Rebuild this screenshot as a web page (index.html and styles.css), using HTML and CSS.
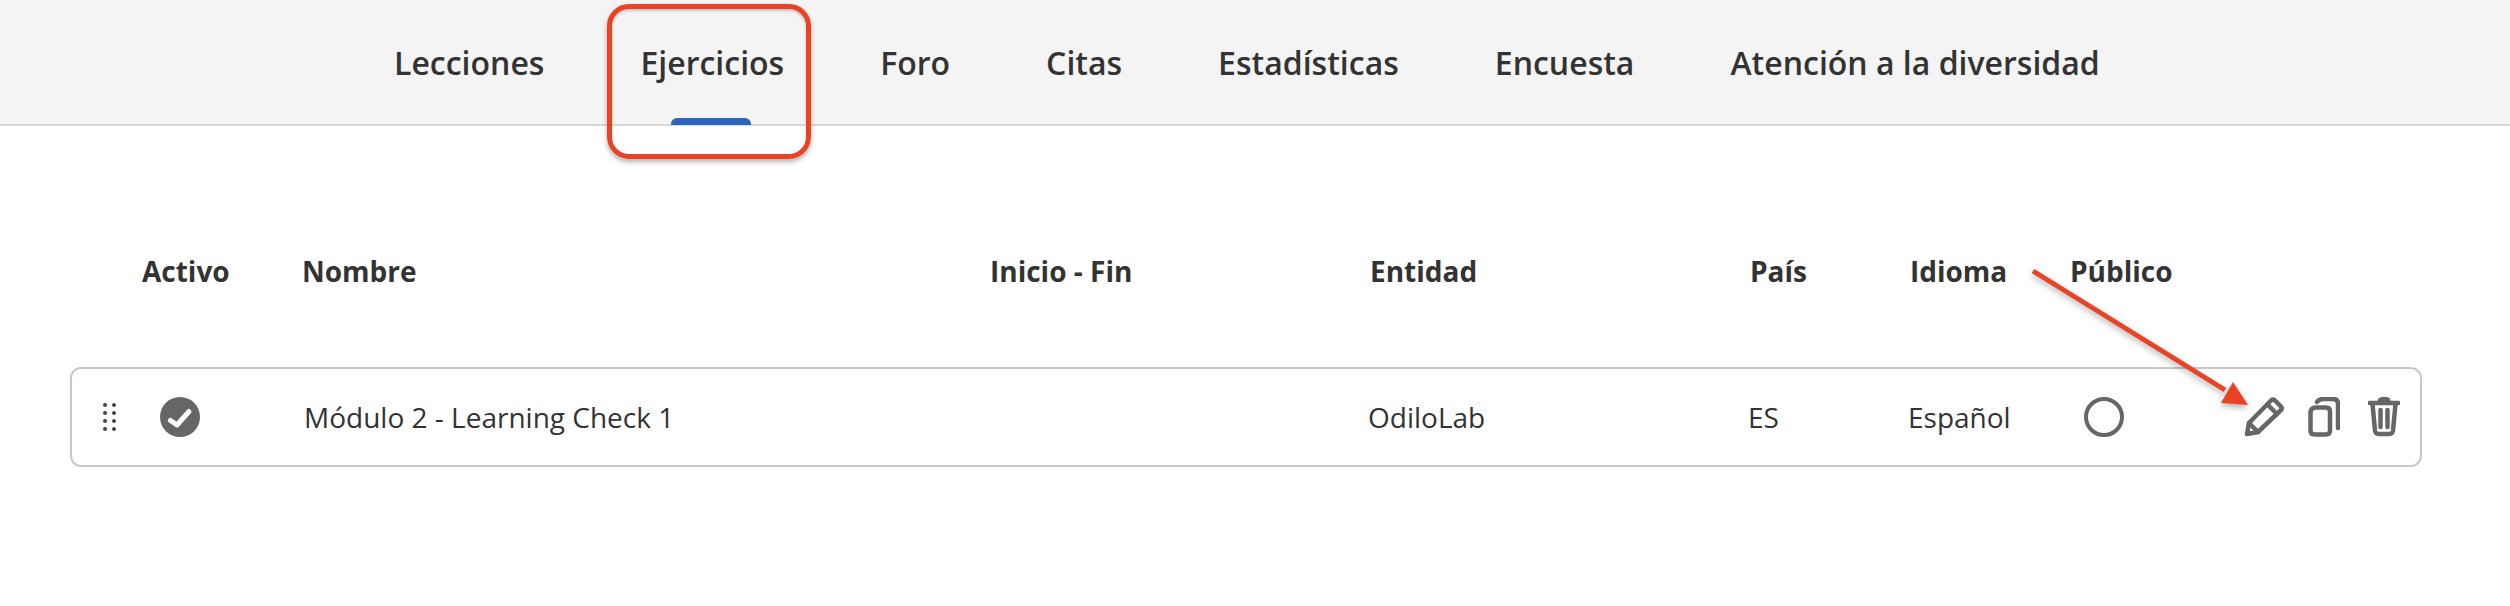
FILE: index.html
```html
<!DOCTYPE html>
<html lang="es">
<head>
<meta charset="utf-8">
<title>Ejercicios</title>
<link rel="stylesheet" href="styles.css">
</head>
<body>
<div class="page">
  <nav class="tabs">
    <a class="tab">Lecciones</a>
    <a class="tab tab-active">Ejercicios</a>
    <a class="tab">Foro</a>
    <a class="tab">Citas</a>
    <a class="tab">Estadísticas</a>
    <a class="tab">Encuesta</a>
    <a class="tab">Atención a la diversidad</a>
  </nav>
  <main class="content">
    <div class="table-head">
      <div>Activo</div>
      <div>Nombre</div>
      <div>Inicio - Fin</div>
      <div>Entidad</div>
      <div>País</div>
      <div>Idioma</div>
      <div>Público</div>
    </div>
    <div class="table-row">
      <div class="drag">
        <svg class="icon-drag" viewBox="0 0 13 28" width="13" height="28"><g class="dots"><circle cx="2" cy="2" r="2"/><circle cx="11" cy="2" r="2"/><circle cx="2" cy="10" r="2"/><circle cx="11" cy="10" r="2"/><circle cx="2" cy="18" r="2"/><circle cx="11" cy="18" r="2"/><circle cx="2" cy="26" r="2"/><circle cx="11" cy="26" r="2"/></g></svg>
      </div>
      <div class="cell-icon">
        <svg viewBox="0 0 40 40" width="40" height="40"><circle class="fill-grey" cx="20" cy="20" r="20"/><path class="tick" d="M10.500 23.500 L17 28 L29 14.500"/></svg>
      </div>
      <div>Módulo 2 - Learning Check 1</div>
      <div></div>
      <div>OdiloLab</div>
      <div>ES</div>
      <div>Español</div>
      <div class="cell-icon">
        <svg viewBox="0 0 40 40" width="40" height="40"><circle class="line line-thin" cx="20" cy="20" r="18"/></svg>
      </div>
      <div class="actions">
        <svg class="icon-pencil" viewBox="0 0 40 40" width="40" height="40"><path class="line" d="M3 37 L5 26 L27 3.500 Q29 1.800 31 3.500 L37 9.500 Q38.500 11.500 37 13 L14 35 Z"/><path class="line" d="M23.500 7.500 L33 17 M5 26 L14 35"/></svg>
        <svg class="icon-copy" viewBox="0 0 32 40" width="32" height="40"><path class="line" d="M2.500 16 Q2.500 10.500 8 10.500 H18 Q22 10.500 22 14.500 V33.500 Q22 37.500 18 37.500 H6.500 Q2.500 37.500 2.500 33.500 Z"/><path class="line" d="M9 5 Q11 2 15 2 H25 Q30 2 30 7 V31"/></svg>
        <svg class="icon-trash" viewBox="0 0 32 40" width="32" height="40"><path class="fill-grey" d="M9 6 Q9.500 0 14 0 H19 Q22.500 0 23 6 Z"/><path class="line" d="M1.500 6 H30.500 M4.500 7 L7 33.500 Q7.500 37 10.500 37 H21.500 Q24.500 37 25 33.500 L27.500 7 M12.500 13 V30 M19.500 13 V30"/></svg>
      </div>
    </div>
  </main>
  <div class="callout-box"></div>
  <svg class="callout-arrow" viewBox="0 0 240 150" width="240" height="150">
    <path class="arrow-shaft" d="M8 6 L200 125"/>
    <path class="arrow-head" d="M208 117 L223 140 L196 138 Z"/>
  </svg>
</div>
</body>
</html>
```
FILE: styles.css
```css
* {
  box-sizing: border-box;
}

html,
body {
  margin: 0;
  background: #ffffff;
}

.page {
  position: relative;
  height: 606px;
  overflow: hidden;
  font-family: "Open Sans", "Noto Sans", sans-serif;
  color: #333333;
}

.tabs {
  display: flex;
  height: 126px;
  padding-left: 394px;
  gap: 96px;
  background: #f4f4f4;
  border-bottom: 2px solid #d8d8d8;
}

.tab {
  position: relative;
  display: flex;
  align-items: center;
  height: 124px;
  font-size: 32px;
  font-weight: 600;
  white-space: nowrap;
}

.tab-active::after {
  content: "";
  position: absolute;
  left: 31px;
  bottom: -1px;
  width: 80px;
  height: 7px;
  background: #2b65bd;
  border-radius: 6px 6px 0 0;
}

.content {
  padding: 120px 88px 0 70px;
}

.table-head {
  display: grid;
  grid-template-columns: 160px 688px 380px 380px 160px 160px 1fr;
  align-items: center;
  height: 50px;
  padding-left: 72px;
  font-size: 28px;
  font-weight: 700;
}

.table-row {
  display: grid;
  grid-template-columns: 88px 144px 686px 378px 380px 160px 176px 160px 1fr;
  align-items: center;
  height: 100px;
  margin-top: 71px;
  border: 2px solid #c8c8c8;
  border-radius: 11px;
  font-size: 28px;
}

.drag {
  display: flex;
  padding-left: 31px;
}

.cell-icon,
.actions {
  display: flex;
  align-items: center;
}

.actions {
  gap: 24px;
}

.icon-trash {
  margin-left: 4px;
}

.dots {
  fill: #444444;
}

.fill-grey {
  fill: #666666;
}

.tick {
  fill: none;
  stroke: #ffffff;
  stroke-width: 5px;
  stroke-linecap: round;
  stroke-linejoin: round;
}

.line {
  fill: none;
  stroke: #666666;
  stroke-width: 4.500px;
  stroke-linecap: round;
  stroke-linejoin: round;
}

.line-thin {
  stroke-width: 4px;
}

.callout-box {
  position: absolute;
  left: 607px;
  top: 4px;
  width: 204px;
  height: 155px;
  border: 5px solid #ea4225;
  border-radius: 22px;
  box-shadow: 0 3px 5px rgba(0, 0, 0, 0.3), inset 0 2px 3px rgba(0, 0, 0, 0.2);
}

.callout-arrow {
  position: absolute;
  left: 2025px;
  top: 265px;
  filter: drop-shadow(0 3px 3px rgba(0, 0, 0, 0.3));
}

.arrow-shaft {
  fill: none;
  stroke: #ea4225;
  stroke-width: 5px;
}

.arrow-head {
  fill: #ea4225;
}
```
